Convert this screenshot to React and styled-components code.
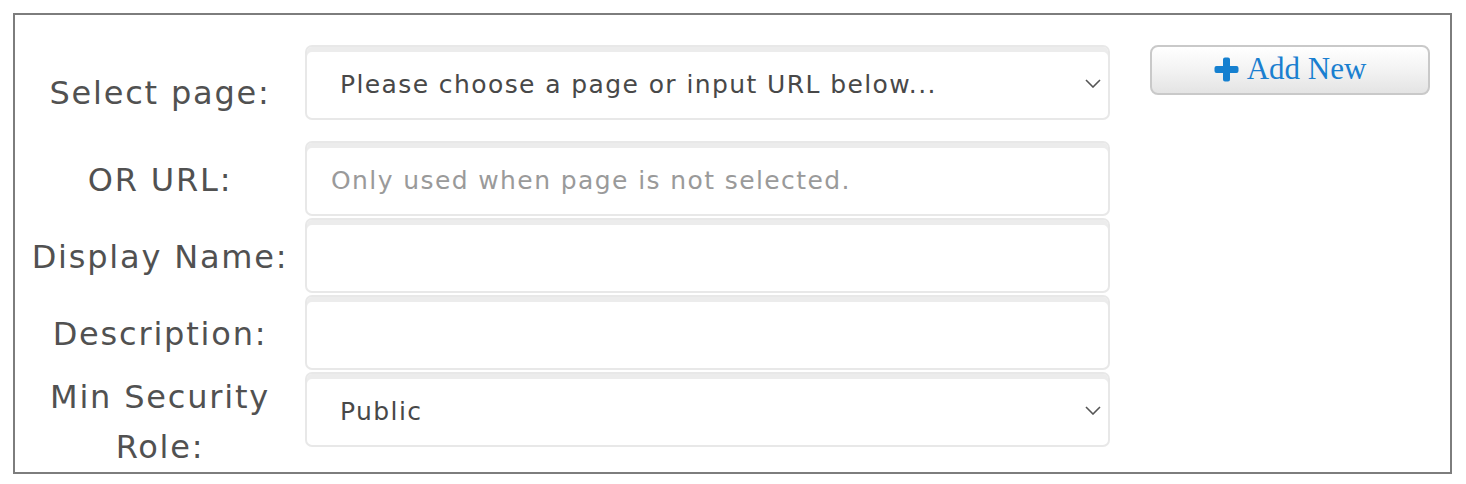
import React from "react";
import styled, { createGlobalStyle } from "styled-components";

const GlobalStyle = createGlobalStyle`
  html, body {
    margin: 0;
    padding: 0;
    background: #ffffff;
  }
  body {
    font-family: "DejaVu Sans", "Liberation Sans", sans-serif;
  }
`;

const Page = styled.div`
  padding: 13px 14px 10px 13px;
`;

const Panel = styled.div`
  border: 2px solid #7d7d7d;
  height: 461px;
  box-sizing: border-box;
  padding-top: 30px;
`;

const Form = styled.div`
  display: grid;
  grid-template-columns: 290px 805px 280px;
  align-items: center;
`;

const Label = styled.label`
  text-align: center;
  font-size: 32px;
  line-height: 50px;
  letter-spacing: 1.8px;
  color: #515151;
  padding: 0 4px;
`;

const FieldCell = styled.div`
  position: relative;
  align-self: ${({ top }) => (top ? "start" : "center")};
  margin-bottom: ${({ gap }) => gap}px;
`;

const fieldBase = `
  display: block;
  width: 100%;
  height: 75px;
  box-sizing: border-box;
  border: 2px solid #e8e8e8;
  border-radius: 7px;
  box-shadow: inset 0 5px 0 #ececec;
  background: #ffffff;
  font-family: "DejaVu Sans", "Liberation Sans", sans-serif;
  font-size: 25px;
  letter-spacing: 1.4px;
  color: #484848;
  outline: none;
  margin: 0;
`;

const Select = styled.select`
  ${fieldBase}
  appearance: none;
  -webkit-appearance: none;
  padding: 3px 40px 0 33px;
`;

const Input = styled.input`
  ${fieldBase}
  padding: 4px 24px 0 24px;
  &::placeholder {
    color: #9a9a9a;
  }
`;

const Chevron = styled.svg`
  position: absolute;
  right: 9px;
  top: 34px;
  width: 16px;
  height: 9px;
  pointer-events: none;
`;

const ButtonCell = styled.div`
  align-self: start;
  padding-left: 40px;
`;

const AddButton = styled.button`
  display: flex;
  align-items: center;
  justify-content: center;
  gap: 8px;
  width: 280px;
  height: 50px;
  box-sizing: border-box;
  border: 2px solid #c9c9c9;
  border-radius: 8px;
  background: linear-gradient(to bottom, #ffffff 0%, #f3f3f3 50%, #e4e4e4 100%);
  font-family: "Liberation Serif", "Times New Roman", serif;
  font-size: 31px;
  color: #1a7fd0;
  padding: 0 0 2px 0;
  cursor: pointer;
`;

const PlusIcon = () => (
  <svg width="25" height="25" viewBox="0 0 25 25" aria-hidden="true">
    <path
      d="M9 2.5 Q9 0.5 11 0.5 H14 Q16 0.5 16 2.5 V9 H22.5 Q24.5 9 24.5 11 V14 Q24.5 16 22.5 16 H16 V22.5 Q16 24.5 14 24.5 H11 Q9 24.5 9 22.5 V16 H2.5 Q0.5 16 0.5 14 V11 Q0.5 9 2.5 9 H9 Z"
      fill="#1580d0"
    />
  </svg>
);

const ChevronIcon = () => (
  <Chevron viewBox="0 0 16 9" aria-hidden="true">
    <path d="M1 1 L8 8 L15 1" fill="none" stroke="#555" strokeWidth="1.6" />
  </Chevron>
);

const Spacer = styled.div``;

export default function App() {
  return (
    <>
      <GlobalStyle />
      <Page>
        <Panel>
          <Form>
            <Label>Select page:</Label>
            <FieldCell top gap={21}>
              <Select defaultValue="">
                <option value="">Please choose a page or input URL below...</option>
              </Select>
              <ChevronIcon />
            </FieldCell>
            <ButtonCell>
              <AddButton type="button">
                <PlusIcon />
                Add New
              </AddButton>
            </ButtonCell>

            <Label>OR URL:</Label>
            <FieldCell gap={2}>
              <Input placeholder="Only used when page is not selected." />
            </FieldCell>
            <Spacer />

            <Label>Display Name:</Label>
            <FieldCell gap={2}>
              <Input />
            </FieldCell>
            <Spacer />

            <Label>Description:</Label>
            <FieldCell gap={2}>
              <Input />
            </FieldCell>
            <Spacer />

            <Label>Min Security Role:</Label>
            <FieldCell top gap={0}>
              <Select defaultValue="public">
                <option value="public">Public</option>
              </Select>
              <ChevronIcon />
            </FieldCell>
            <Spacer />
          </Form>
        </Panel>
      </Page>
    </>
  );
}
